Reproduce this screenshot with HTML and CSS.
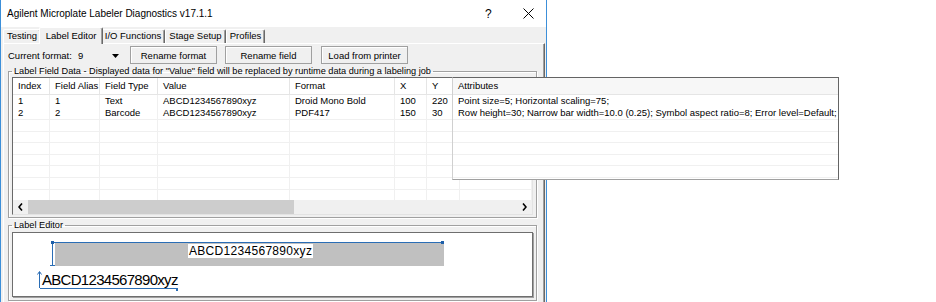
FILE: index.html
```html
<!DOCTYPE html>
<html lang="en">
<head>
    <meta charset="UTF-8">
    <title>Agilent Microplate Labeler Diagnostics v17.1.1</title>
    <link rel="stylesheet" href="styles.css">
</head>
<body>
<div class="screen">
    <div class="window">
        <div class="titlebar">
            <span class="title">Agilent Microplate Labeler Diagnostics v17.1.1</span>
            <span class="help">?</span>
            <span class="close">
                <svg width="11" height="11" viewBox="0 0 11 11"><path d="M0.5 0.5 L10.5 10.5 M10.5 0.5 L0.5 10.5" stroke="#000" stroke-width="1" fill="none"/></svg>
            </span>
        </div>
        <div class="client">
            <div class="tabs">
                <div class="tab w-testing">Testing</div>
                <div class="tab active">Label Editor</div>
                <div class="tab w-io">I/O Functions</div>
                <div class="tab w-stage">Stage Setup</div>
                <div class="tab w-profiles">Profiles</div>
            </div>
            <div class="page">
                <div class="toolbar">
                    <span class="fmt-label">Current format:</span>
                    <div class="combo">
                        <span>9</span>
                        <svg width="7" height="4" viewBox="0 0 7 4"><path d="M0 0 L7 0 L3.5 4 Z" fill="#000"/></svg>
                    </div>
                    <button class="btn">Rename format</button>
                    <button class="btn gap8">Rename field</button>
                    <button class="btn gap9">Load from printer</button>
                </div>

                <fieldset class="group fields">
                    <legend>Label Field Data - Displayed data for "Value" field will be replaced by runtime data during a labeling job</legend>
                    <div class="listview">
                        <div class="lv-row lv-head">
                            <div>Index</div><div>Field Alias</div><div>Field Type</div><div>Value</div><div>Format</div><div>X</div><div>Y</div><div></div>
                        </div>
                        <div class="lv-body">
                            <div class="lv-row first">
                                <div>1</div><div>1</div><div>Text</div><div>ABCD1234567890xyz</div><div>Droid Mono Bold</div><div>100</div><div>220</div><div></div>
                            </div>
                            <div class="lv-row second">
                                <div>2</div><div>2</div><div>Barcode</div><div>ABCD1234567890xyz</div><div>PDF417</div><div>150</div><div>30</div><div></div>
                            </div>
                            <div class="lv-row empty"><div></div><div></div><div></div><div></div><div></div><div></div><div></div><div></div></div>
                            <div class="lv-row empty"><div></div><div></div><div></div><div></div><div></div><div></div><div></div><div></div></div>
                            <div class="lv-row empty"><div></div><div></div><div></div><div></div><div></div><div></div><div></div><div></div></div>
                            <div class="lv-row empty"><div></div><div></div><div></div><div></div><div></div><div></div><div></div><div></div></div>
                            <div class="lv-row empty"><div></div><div></div><div></div><div></div><div></div><div></div><div></div><div></div></div>
                            <div class="lv-row empty"><div></div><div></div><div></div><div></div><div></div><div></div><div></div><div></div></div>
                            <div class="lv-row empty"><div></div><div></div><div></div><div></div><div></div><div></div><div></div><div></div></div>
                        </div>
                        <div class="hscroll">
                            <div class="sb-btn">
                                <svg width="5" height="8" viewBox="0 0 5 8"><path d="M4 0.5 L1 4 L4 7.5" stroke="#000" stroke-width="1.6" fill="none"/></svg>
                            </div>
                            <div class="sb-thumb"></div>
                            <div class="sb-track"></div>
                            <div class="sb-btn">
                                <svg width="5" height="8" viewBox="0 0 5 8"><path d="M1 0.5 L4 4 L1 7.5" stroke="#000" stroke-width="1.6" fill="none"/></svg>
                            </div>
                        </div>
                    </div>
                </fieldset>

                <fieldset class="group editor">
                    <legend>Label Editor</legend>
                    <div class="canvas">
                        <!-- barcode field -->
                        <div class="bc-bar"></div>
                        <div class="sel-top"></div>
                        <div class="sel-left"></div>
                        <div class="sel-tick"></div>
                        <div class="handle h-left"></div>
                        <div class="handle h-right"></div>
                        <div class="bc-text">ABCD1234567890xyz</div>
                        <!-- text field -->
                        <div class="txt-field">ABCD1234567890xyz</div>
                        <svg class="txt-arrow" width="5" height="17" viewBox="0 0 5 17"><path d="M2.5 1 L2.5 17 M0.5 3.5 L2.5 0.5 L4.5 3.5" stroke="#2a6db5" stroke-width="1" fill="none"/></svg>
                        <div class="txt-under"></div>
                        <div class="txt-dot"></div>
                    </div>
                </fieldset>
            </div>
        </div>
    </div>

    <!-- the Attributes column drawn wider than the list -->
    <div class="popup">
        <div class="pp-head">Attributes</div>
        <div class="pp-row first">Point size=5; Horizontal scaling=75;</div>
        <div class="pp-row second">Row height=30; Narrow bar width=10.0 (0.25); Symbol aspect ratio=8; Error level=Default;</div>
        <div class="pp-row"></div>
        <div class="pp-row"></div>
        <div class="pp-row"></div>
        <div class="pp-row"></div>
        <div class="pp-row"></div>
    </div>
</div>
</body>
</html>
```

FILE: styles.css
```css
* {
    box-sizing: border-box;
}
body {
    margin: 0;
    background-color: #ffffff;
    font-family: "Liberation Sans", Arial, sans-serif;
    font-size: 9.5px;
    color: #000;
}
.screen {
    position: relative;
    width: 936px;
    height: 302px;
    overflow: hidden;
}
.window {
    width: 547px;
    height: 302px;
    border-left: 1px solid #3c8fd9;
    border-right: 1px solid #3c8fd9;
    background-color: #f0f0f0;
    display: flex;
    flex-direction: column;
}
.titlebar {
    flex: none;
    height: 27px;
    background-color: #ffffff;
    display: flex;
    align-items: center;
    padding-left: 6px;
}
.title {
    flex: 1;
    font-size: 10px;
}
.help {
    font-size: 12px;
    width: 7px;
    margin-right: 31px;
}
.close {
    display: flex;
    width: 11px;
    margin-right: 12px;
}

.client {
    flex: 1;
    display: flex;
    flex-direction: column;
    padding: 0 1px 0 2px;
}
.tabs {
    flex: none;
    height: 16px;
    display: flex;
    align-items: flex-end;
}
.tab {
    height: 14px;
    line-height: 12px;
    text-align: center;
    border-top: 1px solid #ffffff;
    border-left: 1px solid #ffffff;
    border-right: 1px solid #696969;
    box-shadow: inset -1px 0 #a0a0a0;
    border-radius: 2px 2px 0 0;
}
.w-testing { width: 38px; }
.w-io { width: 64px; }
.w-stage { width: 61px; }
.w-profiles { width: 39px; }
.tab.active {
    position: relative;
    z-index: 1;
    width: 64px;
    height: 17px;
    line-height: 15px;
    margin: 0 -2px -1px -2px;
    background-color: #f0f0f0;
}
.page {
    flex: 1;
    border-top: 1px solid #ffffff;
    border-left: 1px solid #ffffff;
    border-right: 1px solid #696969;
    box-shadow: inset -1px 0 #a0a0a0;
    padding: 2px 0 0 4px;
}

.toolbar {
    height: 18px;
    display: flex;
    align-items: center;
}
.fmt-label {
    width: 68px;
}
.combo {
    width: 52px;
    height: 18px;
    margin-right: 2px;
    display: flex;
    align-items: center;
    justify-content: space-between;
    padding: 1px 9px 0 2px;
}
.btn {
    width: 87px;
    height: 18px;
    padding: 0;
    font-family: inherit;
    font-size: 9.5px;
    color: #000;
    background-color: #f0f0f0;
    border: 1px solid #a0a0a0;
    box-shadow: inset 1px 1px #ffffff;
}
.gap8 { margin-left: 8px; }
.gap9 { margin-left: 9px; }

.group {
    margin: 2px 0 0 0;
    width: 529px;
    padding: 0 3px 2px 3px;
    border: 1px solid #a0a0a0;
    box-shadow: inset 1px 1px #ffffff, 1px 1px #ffffff;
    min-width: 0;
}
.group legend {
    font-size: 9.2px;
    line-height: 11px;
    padding: 0 2px;
}
.editor {
    padding-top: 1px;
    padding-bottom: 3px;
}

.listview {
    width: 521px;
    height: 138px;
    background-color: #ffffff;
    border-top: 1px solid #696969;
    border-left: 1px solid #696969;
    border-right: 1px solid #e3e3e3;
    border-bottom: 1px solid #e3e3e3;
    display: flex;
    flex-direction: column;
    overflow: hidden;
}
.lv-row {
    display: grid;
    grid-template-columns: 37px 50px 58px 132px 105px 32px 33px 1fr;
    white-space: nowrap;
}
.lv-row > div {
    padding-left: 5px;
    overflow: hidden;
    border-right: 1px solid #f0f0f0;
}
.lv-head {
    flex: none;
    height: 17px;
    line-height: 16px;
    border-bottom: 1px solid #e5e5e5;
}
.lv-head > div {
    border-right-color: #e5e5e5;
}
.lv-body {
    flex: 1;
    overflow: hidden;
}
.lv-row.first {
    height: 12px;
    line-height: 12px;
}
.lv-row.second {
    height: 13px;
    line-height: 12px;
    border-bottom: 1px solid #f0f0f0;
}
.lv-row.empty {
    height: 11.6px;
    border-bottom: 1px solid #f0f0f0;
}

.hscroll {
    flex: none;
    height: 14px;
    display: flex;
    background-color: #f0f0f0;
}
.sb-btn {
    width: 15px;
    display: flex;
    align-items: center;
    justify-content: center;
}
.sb-thumb {
    width: 266px;
    background-color: #cdcdcd;
}
.sb-track {
    flex: 1;
}

.canvas {
    position: relative;
    width: 521px;
    height: 65px;
    background-color: #ffffff;
    border: 1px solid #6e6e6e;
    box-shadow: 1px 1px #a0a0a0;
}
.bc-bar {
    position: absolute;
    left: 42px;
    top: 10px;
    width: 389px;
    height: 23px;
    background-color: #c0c0c0;
}
.sel-top {
    position: absolute;
    left: 39px;
    top: 9px;
    width: 391px;
    height: 1px;
    background-color: #2a6db5;
}
.sel-left {
    position: absolute;
    left: 39px;
    top: 9px;
    width: 1px;
    height: 24px;
    background-color: #2a6db5;
}
.sel-tick {
    position: absolute;
    left: 37px;
    top: 32px;
    width: 5px;
    height: 1px;
    background-color: #2a6db5;
}
.handle {
    position: absolute;
    top: 8px;
    width: 3px;
    height: 3px;
    background-color: #1c5ea8;
}
.h-left { left: 38px; }
.h-right { left: 428px; }
.bc-text {
    position: absolute;
    left: 175px;
    top: 11px;
    height: 14px;
    padding: 0 1px;
    background-color: #ffffff;
    font-size: 12px;
    line-height: 14px;
    letter-spacing: 0.3px;
}
.txt-field {
    position: absolute;
    left: 29px;
    top: 38px;
    font-size: 15px;
    line-height: 17px;
    letter-spacing: -0.7px;
}
.txt-arrow {
    position: absolute;
    left: 24px;
    top: 38px;
}
.txt-under {
    position: absolute;
    left: 27px;
    top: 55px;
    width: 137px;
    height: 1px;
    background-color: #2a6db5;
}
.txt-dot {
    position: absolute;
    left: 163px;
    top: 55px;
    width: 2px;
    height: 3px;
    background-color: #2a6db5;
}

.popup {
    position: absolute;
    left: 452px;
    top: 77px;
    width: 387px;
    height: 103px;
    background-color: #ffffff;
    border-top: 1px solid #646464;
    border-right: 1px solid #646464;
    border-bottom: 1px solid #a0a0a0;
    border-left: 1px solid #d0d0d0;
    overflow: hidden;
    white-space: nowrap;
}
.pp-head {
    height: 17px;
    line-height: 16px;
    padding-left: 5px;
    background-color: #f7f7f7;
    border-bottom: 1px solid #e5e5e5;
}
.pp-row {
    height: 11.6px;
    padding-left: 5px;
    border-bottom: 1px solid #f0f0f0;
}
.pp-row.first {
    height: 12px;
    line-height: 12px;
    border-bottom: none;
}
.pp-row.second {
    height: 13px;
    line-height: 12px;
}
```
